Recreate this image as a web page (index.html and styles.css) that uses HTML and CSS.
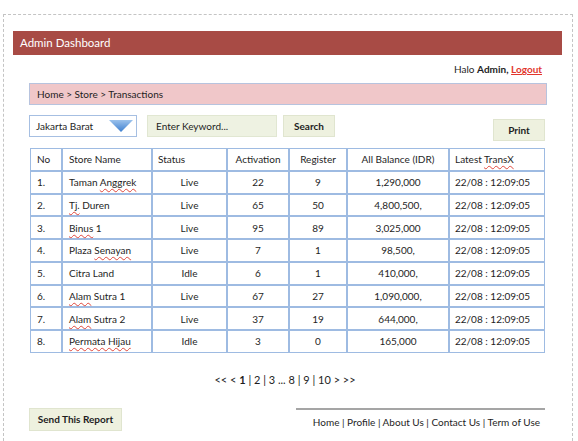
FILE: index.html
```html
<!DOCTYPE html>
<html lang="en">

<head>
    <meta charset="UTF-8">
    <meta name="viewport" content="width=device-width, initial-scale=1.0">
    <title>Admin Dashboard</title>
    <link rel="stylesheet" href="styles.css">
</head>

<body>
    <div class="page">
        <header class="topbar">Admin Dashboard</header>
        <div class="greeting">Halo <b>Admin,</b> <a href="#" class="logout">Logout</a></div>

        <div class="content">
            <div class="breadcrumb">Home &gt; Store &gt; Transactions</div>

            <div class="toolbar">
                <div class="select">
                    <span>Jakarta Barat</span>
                    <svg class="arrow" width="24" height="12" viewBox="0 0 24 12">
                        <defs>
                            <linearGradient id="ag" x1="0" y1="0" x2="0" y2="1">
                                <stop offset="0" stop-color="#9cc2ec" />
                                <stop offset="1" stop-color="#3d7fcf" />
                            </linearGradient>
                        </defs>
                        <path d="M0 0 H24 L12 12 Z" fill="url(#ag)" />
                    </svg>
                </div>
                <div class="keyword">Enter Keyword...</div>
                <div class="btn">Search</div>
                <div class="btn print">Print</div>
            </div>

            <table class="grid">
                <colgroup>
                    <col class="c-no">
                    <col class="c-name">
                    <col class="c-status">
                    <col class="c-act">
                    <col class="c-reg">
                    <col class="c-bal">
                    <col class="c-last">
                </colgroup>
                <thead>
                    <tr>
                        <th>No</th>
                        <th class="name">Store Name</th>
                        <th class="left">Status</th>
                        <th>Activation</th>
                        <th>Register</th>
                        <th>All Balance (IDR)</th>
                        <th class="left">Latest <u class="sp">TransX</u></th>
                    </tr>
                </thead>
                <tbody>
                    <tr><td>1.</td><td class="name">Taman <u class="sp">Anggrek</u></td><td>Live</td><td>22</td><td>9</td><td>1,290,000</td><td class="left">22/08 : 12:09:05</td></tr>
                    <tr><td>2.</td><td class="name"><u class="sp">Tj.</u> Duren</td><td>Live</td><td>65</td><td>50</td><td>4,800,500,</td><td class="left">22/08 : 12:09:05</td></tr>
                    <tr><td>3.</td><td class="name"><u class="sp">Binus</u> 1</td><td>Live</td><td>95</td><td>89</td><td>3,025,000</td><td class="left">22/08 : 12:09:05</td></tr>
                    <tr><td>4.</td><td class="name">Plaza <u class="sp">Senayan</u></td><td>Live</td><td>7</td><td>1</td><td>98,500,</td><td class="left">22/08 : 12:09:05</td></tr>
                    <tr><td>5.</td><td class="name">Citra Land</td><td>Idle</td><td>6</td><td>1</td><td>410,000,</td><td class="left">22/08 : 12:09:05</td></tr>
                    <tr><td>6.</td><td class="name"><u class="sp">Alam</u> Sutra 1</td><td>Live</td><td>67</td><td>27</td><td>1,090,000,</td><td class="left">22/08 : 12:09:05</td></tr>
                    <tr><td>7.</td><td class="name"><u class="sp">Alam</u> Sutra 2</td><td>Live</td><td>37</td><td>19</td><td>644,000,</td><td class="left">22/08 : 12:09:05</td></tr>
                    <tr><td>8.</td><td class="name"><u class="sp">Permata Hijau</u></td><td>Idle</td><td>3</td><td>0</td><td>165,000</td><td class="left">22/08 : 12:09:05</td></tr>
                </tbody>
            </table>

            <div class="pager">&lt;&lt; &lt; <b>1</b> | 2 | 3 ... 8 | 9 | 10 &gt; &gt;&gt;</div>

            <div class="bottom">
                <div class="btn send">Send This Report</div>
                <nav class="footlinks">Home | Profile | About Us | Contact Us | Term of Use</nav>
            </div>
        </div>
    </div>
</body>

</html>
```

FILE: styles.css
```css
body {
    margin: 0;
    background: #ffffff;
    font-family: Lato, "Open Sans", sans-serif;
    font-size: 10px;
    color: #1e1e1e;
}

.page {
    box-sizing: border-box;
    margin: 14px 5px 0 3px;
    height: 427px;
    border: 1px dashed #c4c4c4;
    border-bottom: none;
    padding: 16px 10px 0 9px;
}

.topbar {
    background-color: #a84b45;
    color: #ffffff;
    height: 24px;
    line-height: 24px;
    padding-left: 7px;
    font-size: 11.5px;
}

.greeting {
    text-align: right;
    padding: 8px 20px 0 0;
    height: 20px;
}

.logout {
    color: #e2362c;
    font-weight: bold;
}

.content {
    margin: 0 15px 0 16px;
}

.breadcrumb {
    background-color: #f0c7c9;
    border: 1px solid #b7c3de;
    height: 20px;
    line-height: 20px;
    padding-left: 7px;
}

.toolbar {
    display: flex;
    align-items: flex-start;
    margin-top: 10px;
    height: 33px;
}

.select {
    width: 97px;
    height: 20px;
    border: 1px solid #a6bfe2;
    display: flex;
    align-items: center;
    justify-content: space-between;
    padding: 0 3px 0 6px;
}

.select span {
    line-height: 20px;
}

.arrow {
    display: block;
}

.keyword {
    margin-left: 10px;
    width: 120px;
    height: 20px;
    line-height: 20px;
    padding-left: 8px;
    background-color: #eef2e2;
    border: 1px solid #e1e7d2;
}

.btn {
    background-color: #eef1df;
    border: 1px solid #e0e5cf;
    font-weight: bold;
    height: 20px;
    line-height: 20px;
    text-align: center;
}

.toolbar .btn {
    margin-left: 6px;
    width: 50px;
}

.toolbar .print {
    margin-left: auto;
    margin-right: 2px;
    margin-top: 4px;
}

.grid {
    border-collapse: separate;
    border-spacing: 0;
    margin-left: 1px;
    width: 515px;
    table-layout: fixed;
}

.grid th,
.grid td {
    box-sizing: border-box;
    border: 1px solid #9ebbe2;
    height: 22.75px;
    padding: 0;
    text-align: center;
    font-weight: normal;
    white-space: nowrap;
}

.grid th:first-child,
.grid td:first-child {
    text-align: left;
    padding-left: 6px;
}

.grid .name {
    text-align: left;
    padding-left: 6px;
}

.grid .left {
    text-align: left;
    padding-left: 5px;
}

.c-no { width: 32px; }
.c-name { width: 90px; }
.c-status { width: 75px; }
.c-act { width: 62px; }
.c-reg { width: 58px; }
.c-bal { width: 102px; }
.c-last { width: 96px; }

.sp {
    text-decoration: underline wavy #e0483c;
    text-decoration-thickness: 1px;
    text-underline-offset: 2px;
}

.pager {
    text-align: center;
    margin-top: 20px;
    padding-right: 6px;
    font-size: 11px;
}

.bottom {
    display: flex;
    justify-content: space-between;
    align-items: flex-start;
    margin-top: 22px;
}

.btn.send {
    width: 91px;
    height: 21px;
    line-height: 21px;
}

.footlinks {
    width: 249px;
    border-top: 2px solid #a5a5a5;
    text-align: right;
    padding: 6px 5px 0 0;
    box-sizing: border-box;
    margin-right: 2px;
    white-space: nowrap;
}
```
